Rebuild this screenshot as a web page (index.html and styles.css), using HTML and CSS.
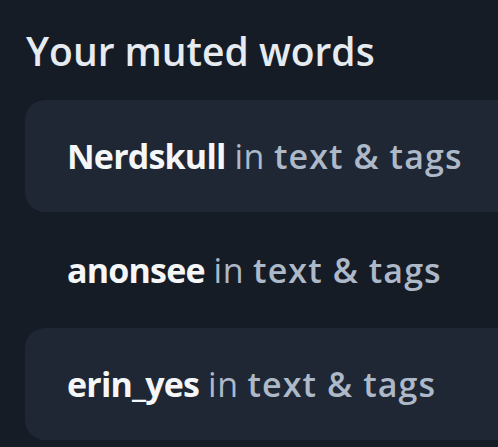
FILE: index.html
```html
<!DOCTYPE html>
<html lang="en">
<head>
<meta charset="utf-8">
<title>Your muted words</title>
<link rel="stylesheet" href="styles.css">
</head>
<body>
<main class="page">
  <h1 class="title">Your muted words</h1>
  <ul class="list">
    <li class="row row--filled"><p class="label"><span class="word">Nerdskull</span> <span class="in">in</span> <span class="where">text &amp; tags</span></p></li>
    <li class="row"><p class="label"><span class="word">anonsee</span> <span class="in">in</span> <span class="where">text &amp; tags</span></p></li>
    <li class="row row--filled"><p class="label"><span class="word">erin_yes</span> <span class="in">in</span> <span class="where">text &amp; tags</span></p></li>
  </ul>
</main>
</body>
</html>
```
FILE: styles.css
```css
html, body {
  margin: 0;
  padding: 0;
  background: #161c25;
  height: 100%;
  overflow: hidden;
}
.page {
  font-family: "Open Sans", "Noto Sans", sans-serif;
  padding: 27px 0 0 25px;
}
.title {
  margin: 0;
  font-size: 39px;
  line-height: 48px;
  font-weight: 600;
  color: #e6ebf1;
  padding-left: 1px;
}
.list {
  list-style: none;
  margin: 25px 0 0 0;
  padding: 0;
  display: flex;
  flex-direction: column;
  gap: 2px;
}
.row {
  height: 112px;
  display: flex;
  align-items: center;
  padding-left: 42px;
  border-radius: 20px 0 0 20px;
}
.row--filled {
  background: #1e2733;
}
.label {
  margin: 0;
  font-size: 34px;
  line-height: 1.2;
  white-space: nowrap;
  color: #adb9c8;
}
.word {
  font-weight: 700;
  color: #f4f6f8;
  letter-spacing: -0.8px;
}
.in {
  font-weight: 400;
  letter-spacing: 0.6px;
}
.where {
  font-weight: 600;
  letter-spacing: 1.1px;
}
```
